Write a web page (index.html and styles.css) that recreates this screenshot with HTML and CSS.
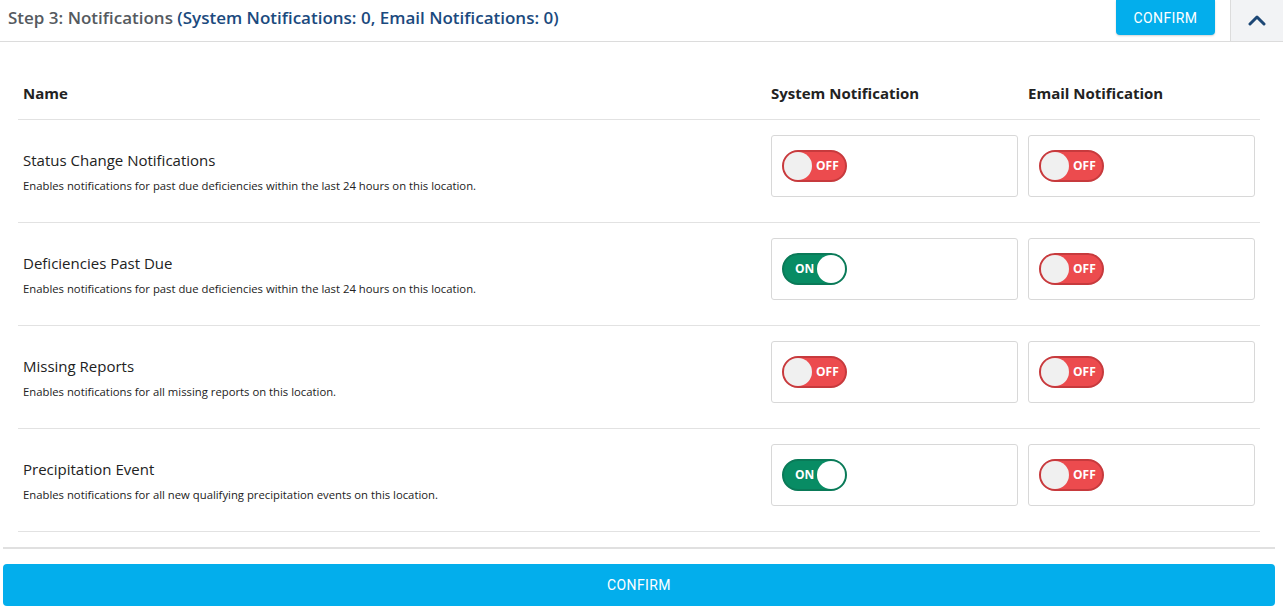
FILE: index.html
```html
<!DOCTYPE html>
<html lang="en">
<head>
<meta charset="utf-8">
<title>Step 3: Notifications</title>
<link rel="stylesheet" href="styles.css">
</head>
<body>
<div class="panel">
  <header class="panel-head">
    <h2 class="panel-title">Step 3: Notifications <span class="counts">(System Notifications: 0, Email Notifications: 0)</span></h2>
    <button class="btn btn-confirm-sm">CONFIRM</button>
    <button class="collapse" aria-label="Collapse">
      <svg width="18" height="12" viewBox="0 0 18 12"><path d="M2 10 L9 3 L16 10" fill="none" stroke="#1d4775" stroke-width="3" stroke-linecap="round" stroke-linejoin="round"/></svg>
    </button>
  </header>

  <div class="panel-body">
    <div class="table">
      <div class="row head-row">
        <div class="cell name">Name</div>
        <div class="cell col">System Notification</div>
        <div class="cell col">Email Notification</div>
      </div>

      <div class="row">
        <div class="cell name">
          <div class="item-title">Status Change Notifications</div>
          <div class="item-desc">Enables notifications for past due deficiencies within the last 24 hours on this location.</div>
        </div>
        <div class="cell col"><div class="box"><span class="toggle off"><span class="knob"></span><span class="lbl">OFF</span></span></div></div>
        <div class="cell col"><div class="box narrow"><span class="toggle off"><span class="knob"></span><span class="lbl">OFF</span></span></div></div>
      </div>

      <div class="row">
        <div class="cell name">
          <div class="item-title">Deficiencies Past Due</div>
          <div class="item-desc">Enables notifications for past due deficiencies within the last 24 hours on this location.</div>
        </div>
        <div class="cell col"><div class="box"><span class="toggle on"><span class="lbl">ON</span><span class="knob"></span></span></div></div>
        <div class="cell col"><div class="box narrow"><span class="toggle off"><span class="knob"></span><span class="lbl">OFF</span></span></div></div>
      </div>

      <div class="row">
        <div class="cell name">
          <div class="item-title">Missing Reports</div>
          <div class="item-desc">Enables notifications for all missing reports on this location.</div>
        </div>
        <div class="cell col"><div class="box"><span class="toggle off"><span class="knob"></span><span class="lbl">OFF</span></span></div></div>
        <div class="cell col"><div class="box narrow"><span class="toggle off"><span class="knob"></span><span class="lbl">OFF</span></span></div></div>
      </div>

      <div class="row">
        <div class="cell name">
          <div class="item-title">Precipitation Event</div>
          <div class="item-desc">Enables notifications for all new qualifying precipitation events on this location.</div>
        </div>
        <div class="cell col"><div class="box"><span class="toggle on"><span class="lbl">ON</span><span class="knob"></span></span></div></div>
        <div class="cell col"><div class="box narrow"><span class="toggle off"><span class="knob"></span><span class="lbl">OFF</span></span></div></div>
      </div>
    </div>
  </div>

  <div class="panel-foot">
    <button class="btn btn-confirm-lg">CONFIRM</button>
  </div>
</div>
</body>
</html>
```

FILE: styles.css
```css
* { box-sizing: border-box; }

html, body {
  margin: 0;
  padding: 0;
  background: #fff;
  font-family: "Open Sans", "Liberation Sans", sans-serif;
  color: #222;
}

.panel { width: 1283px; }

/* header bar */
.panel-head {
  display: flex;
  align-items: flex-start;
  height: 42px;
  border-bottom: 1px solid #dcdcdc;
}

.panel-title {
  flex: 1;
  margin: 0;
  padding: 6px 0 0 8px;
  font-size: 17px;
  font-weight: 600;
  color: #555a5f;
}

.counts { color: #1b4a7e; }

.btn {
  border: 0;
  cursor: pointer;
  font-family: Roboto, "Liberation Sans", sans-serif;
  color: #fff;
  background: #03aeec;
  letter-spacing: 0.4px;
}

.btn-confirm-sm {
  width: 99px;
  height: 35px;
  margin-right: 15px;
  border-radius: 0 0 4px 4px;
  font-size: 14px;
  font-weight: 400;
  box-shadow: 0 1px 2px rgba(0,0,0,0.18);
}

.collapse {
  width: 53px;
  height: 41px;
  border: 0;
  border-left: 1px solid #dcdcdc;
  background: #f2f3f5;
  display: flex;
  align-items: center;
  justify-content: center;
  padding: 0 0 1px;
}

/* table */
.panel-body {
  margin: 0 8px 0 3px;
  padding: 0 15px 15px;
  border-bottom: 2px solid #e0e0e0;
}

.table { width: 1242px; }

.row {
  display: grid;
  grid-template-columns: 753px 257px 232px;
  border-bottom: 1px solid #e2e2e2;
  height: 103px;
  align-items: center;
}

.head-row {
  height: 78px;
  align-items: end;
  padding-bottom: 16px;
}

.head-row .cell {
  font-weight: 700;
  font-size: 15px;
  color: #222;
}

.name { padding-left: 5px; }

.item-title {
  font-size: 15px;
  color: #222;
  line-height: 20px;
}

.item-desc {
  font-size: 11.3px;
  color: #222;
  margin-top: 8px;
  line-height: 15px;
}

.box {
  width: 247px;
  height: 62px;
  border: 1px solid #d8d8d8;
  border-radius: 3px;
  display: flex;
  align-items: center;
  padding-left: 10px;
  margin-bottom: 11px;
}

.box.narrow { width: 227px; }

/* switches */
.toggle {
  width: 65px;
  height: 32px;
  border-radius: 16px;
  display: flex;
  align-items: center;
  padding: 0 2px;
  font-family: "Open Sans", "Liberation Sans", sans-serif;
  font-weight: 700;
  font-size: 12px;
  color: #fff;
}

.toggle .knob {
  width: 28px;
  height: 28px;
  border-radius: 50%;
  flex: none;
}

.toggle.off {
  background: #ec4b4e;
  border: 2px solid #c73a3d;
  padding-left: 0;
}

.toggle.off .knob { background: #f0f0f0; }

.toggle.off .lbl { margin-left: 4px; }

.toggle.on {
  background: #088c64;
  border: 2px solid #0a7a58;
  justify-content: space-between;
  padding-right: 0;
}

.toggle.on .knob { background: #fff; }

.toggle.on .lbl { margin-left: 9px; }

/* footer */
.panel-foot {
  padding: 15px 8px 3px 3px;
}

.btn-confirm-lg {
  width: 1272px;
  height: 42px;
  border-radius: 4px;
  font-size: 14px;
}
```
